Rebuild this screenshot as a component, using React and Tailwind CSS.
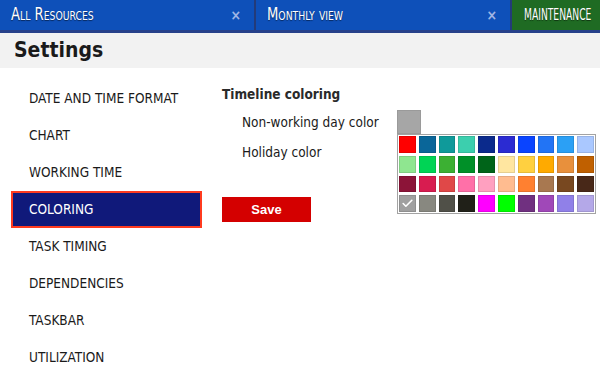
import { Check } from 'lucide-react'

const TABS = [
  { label: 'All Resources', w: 'w-[256px]', closable: true },
  { label: 'Monthly view', w: 'w-[256px]', closable: true },
  { label: 'MAINTENANCE', w: 'w-[88px]', green: true },
]

const NAV = [
  'DATE AND TIME FORMAT',
  'CHART',
  'WORKING TIME',
  'COLORING',
  'TASK TIMING',
  'DEPENDENCIES',
  'TASKBAR',
  'UTILIZATION',
]

const PALETTE = [
  '#ff0000', '#0a6699', '#0f9a9a', '#3ccfae', '#0b2a8c', '#2b2bd2', '#0a44ff', '#2274f5', '#2ba0f5', '#aac8ff',
  '#8fe690', '#00d455', '#3cb033', '#009028', '#006419', '#ffe6a0', '#ffd040', '#ffaa00', '#e8903c', '#c06000',
  '#8c1438', '#d81c50', '#e04848', '#ff70a8', '#ffa0c0', '#ffbc90', '#ff8030', '#a87850', '#784820', '#482818',
  '#a0a0a0', '#888880', '#505048', '#202018', '#ff00ff', '#00ff00', '#703080', '#a048b8', '#9080e8', '#b4a8e8',
]

const condensed = { fontFamily: '"DejaVu Sans Condensed", "DejaVu Sans", sans-serif' }

function Tab({ tab }) {
  return (
    <div
      className={`${tab.w} shrink-0 flex items-center border-r-2 border-[#233b7a] last:border-r-0 overflow-hidden ${
        tab.green ? 'bg-[#1f6b23] pl-[12px]' : 'bg-[#0e50b9] justify-between pl-[11px] pr-[13px]'
      }`}
    >
      <span
        className={`inline-block origin-left text-white whitespace-nowrap [text-shadow:0_1px_1px_rgba(0,0,0,0.5)] ${
          tab.green ? 'text-[15px] scale-x-[0.68]' : 'text-[17px] scale-x-[0.86] [font-variant:small-caps]'
        }`}
      >
        {tab.label}
      </span>
      {tab.closable && <span className="text-[#9fb4e4] text-[14px] font-bold leading-none">×</span>}
    </div>
  )
}

export default function App() {
  return (
    <div className="w-[600px] h-[368px] overflow-hidden bg-white" style={condensed}>
      <div className="flex h-[33px] border-b-[3px] border-[#27418a]">
        {TABS.map((t) => (
          <Tab key={t.label} tab={t} />
        ))}
      </div>

      <div className="h-[35px] bg-[#f2f2f2] flex items-center pl-[14px]">
        <h1 className="text-[21px] font-bold text-[#1a1a1a] leading-none">Settings</h1>
      </div>

      <div className="flex pt-[12px]">
        <nav className="w-[222px] shrink-0 flex flex-col pl-[11px]">
          {NAV.map((item) => {
            const active = item === 'COLORING'
            return (
              <div
                key={item}
                className={`h-[37px] w-[191px] flex items-center pl-[16px] border-2 text-[13.5px] ${
                  active
                    ? 'bg-[#10197a] border-[#ff3b1f] text-white'
                    : 'border-transparent text-[#1a1a1a]'
                }`}
              >
                {item}
              </div>
            )
          })}
        </nav>

        <div className="flex-1 pt-[4px]">
          <div className="text-[13.5px] leading-[20px] font-bold text-[#2a2a2a]">Timeline coloring</div>

          <div className="relative pl-[20px] mt-[4px] text-[13.5px] text-[#1a1a1a]">
            <div className="flex items-center h-[28px]">
              <span className="w-[155px]">Non-working day color</span>
              <div className="w-[24px] h-[24px] bg-[#a6a6a6] border border-[#9a9a9a]" />
            </div>
            <div className="flex items-center h-[28px] mt-[2px]">
              <span>Holiday color</span>
            </div>

            <div className="absolute left-[175px] top-[26px] w-[199px] bg-white border border-[#a3a3a3] p-[1px] grid grid-cols-10 gap-[3px]">
              {PALETTE.map((c, i) => (
                <div
                  key={i}
                  className="aspect-square border border-black/10 flex items-center justify-center"
                  style={{ backgroundColor: c }}
                >
                  {i === 30 && <Check className="w-[13px] h-[13px] text-white" strokeWidth={3} />}
                </div>
              ))}
            </div>
          </div>

          <button
            className="mt-[31px] w-[89px] h-[25px] bg-[#d40000] text-white text-[13px] font-bold"
            style={{ fontFamily: '"Liberation Sans", Arial, sans-serif' }}
          >
            Save
          </button>
        </div>
      </div>
    </div>
  )
}
